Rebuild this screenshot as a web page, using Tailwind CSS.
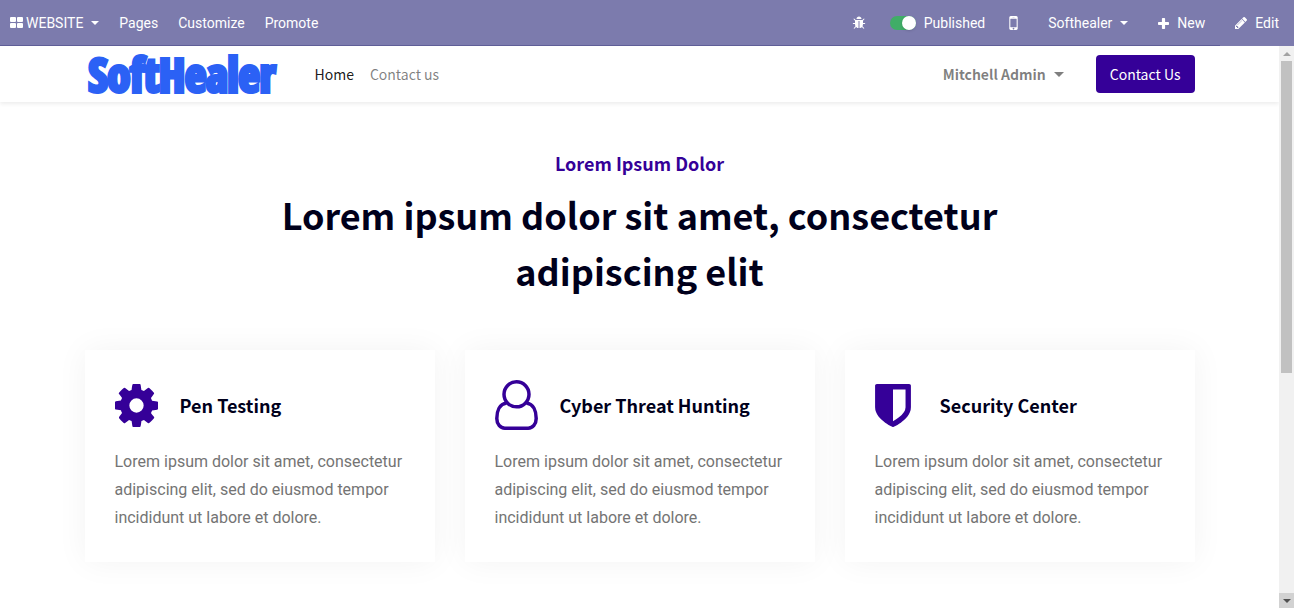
<!DOCTYPE html>
<html lang="en">
<head>
  <meta charset="UTF-8" />
  <meta name="viewport" content="width=device-width, initial-scale=1.0" />
  <title>Home | Softhealer</title>
  <script src="https://cdn.jsdelivr.net/npm/@tailwindcss/browser@4"></script>
</head>
<body class="h-screen flex flex-col overflow-hidden bg-white font-['Roboto',sans-serif] text-base text-[#747474]">
  <!-- editor bar -->
  <nav class="flex h-[46px] shrink-0 items-center justify-between bg-[#7c7bad] text-sm text-white shadow-[inset_0_-1px_0_#5f5e97]">
    <div class="flex h-full items-center gap-5 pl-[10px]">
      <button class="flex items-center">
        <svg class="mr-[3px] h-3 w-[13px]" viewBox="0 0 13 12" fill="currentColor"><rect width="6" height="5" rx="1"/><rect x="7" width="6" height="5" rx="1"/><rect y="6" width="6" height="5" rx="1"/><rect x="7" y="6" width="6" height="5" rx="1"/></svg>
        WEBSITE
        <span class="ml-2 border-x-4 border-t-4 border-x-transparent border-t-white"></span>
      </button>
      <a href="#">Pages</a>
      <a href="#">Customize</a>
      <a href="#">Promote</a>
    </div>
    <div class="flex h-full items-center">
      <button class="mr-6" aria-label="Debug">
        <svg class="size-[14px]" viewBox="0 0 1792 1792" fill="currentColor"><path d="M1696 960q0 26-19 45t-45 19h-224q0 171-67 290l208 209q19 19 19 45t-19 45q-18 19-45 19t-45-19l-198-197q-5 5-15 13t-42 28.5-65 36.5-82 29-97 13v-896h-128v896q-51 0-101.5-13.5t-87-33-66-39-43.5-32.5l-15-14-183 207q-20 21-48 21-24 0-43-16-19-18-20.5-44.5t15.5-46.5l202-227q-58-114-58-274h-224q-26 0-45-19t-19-45 19-45 45-19h224v-294l-173-173q-19-19-19-45t19-45 45-19 45 19l173 173h844l173-173q19-19 45-19t45 19 19 45-19 45l-173 173v294h224q26 0 45 19t19 45zm-480-576h-640q0-133 93.5-226.5t226.5-93.5 226.5 93.5 93.5 226.5z"/></svg>
      </button>
      <label class="mr-6 flex items-center gap-2">
        <input type="checkbox" checked class="flex h-[14px] w-[26px] appearance-none items-center justify-end rounded-full bg-[#40ad67] before:size-[14px] before:rounded-full before:bg-white before:shadow" />
        Published
      </label>
      <button class="mr-[30px]" aria-label="Mobile preview">
        <svg class="h-[14px] w-[9px]" viewBox="512 256 768 1280" fill="currentColor"><path d="M976 1408q0-33-23.5-56.5t-56.5-23.5-56.5 23.5-23.5 56.5 23.5 56.5 56.5 23.5 56.5-23.5 23.5-56.5zm208-160v-704q0-13-9.5-22.5t-22.5-9.5h-512q-13 0-22.5 9.5t-9.5 22.5v704q0 13 9.5 22.5t22.5 9.5h512q13 0 22.5-9.5t9.5-22.5zm-192-848q0-16-16-16h-160q-16 0-16 16t16 16h160q16 0 16-16zm288-16v1024q0 52-38 90t-90 38h-512q-52 0-90-38t-38-90v-1024q0-52 38-90t90-38h512q52 0 90 38t38 90z"/></svg>
      </button>
      <button class="mr-[30px] flex items-center">Softhealer <span class="ml-2 border-x-4 border-t-4 border-x-transparent border-t-white"></span></button>
      <button class="mr-[15px] flex items-center gap-2">
        <svg class="size-[11px]" viewBox="0 0 11 11" fill="currentColor"><path d="M4.7 0h1.6q.8 0 .8.8v3.100h3.100q.8 0 .8.8v1.600q0 .8-.8.8H7.100v3.100q0 .8-.8.8H4.700q-.8 0-.8-.8V7.100H.8Q0 7.100 0 6.300V4.700q0-.8.8-.8h3.100V.8q0-.8.8-.8z"/></svg>
        New
      </button>
      <button class="flex h-full items-center gap-2 bg-[#7c7bad] px-[15px]">
        <svg class="size-3" viewBox="128 149 1515 1515" fill="currentColor"><path d="M491 1536l91-91-235-235-91 91v107h128v128h107zm523-928q0-22-22-22-10 0-17 7l-542 542q-7 7-7 17 0 22 22 22 10 0 17-7l542-542q7-7 7-17zm-54-192l416 416-832 832h-416v-416zm683 96q0 53-37 90l-166 166-416-416 166-165q36-38 90-38 53 0 91 38l235 234q37 39 37 91z"/></svg>
        Edit
      </button>
    </div>
  </nav>

  <div class="flex min-h-0 flex-1">
    <div class="min-w-0 flex-1 overflow-hidden">
      <header class="h-14 shadow-[0_2px_4px_rgba(0,0,0,0.075)] font-['Noto_Sans_CJK_SC',sans-serif] text-sm">
        <div class="mx-auto flex h-full max-w-[1140px] items-center px-[15px]">
          <a href="#" class="mr-8 w-[198px] pl-1 font-['Liberation_Sans_Narrow','Open_Sans_Condensed',sans-serif] text-[46px] leading-14 font-bold text-[#2b61f5] [-webkit-text-stroke:4px_#2b61f5]">SoftHealer</a>
          <a href="#" class="mr-4 text-black/90">Home</a>
          <a href="#" class="text-black/50">Contact us</a>
          <button class="ml-auto mr-8 flex items-center font-bold text-black/50">Mitchell Admin <span class="ml-2 border-x-[5px] border-t-[5px] border-x-transparent border-t-[#7f7f7f]"></span></button>
          <a href="#" class="flex h-[38px] items-center rounded bg-[#350098] px-[14px] text-white">Contact Us</a>
        </div>
      </header>

      <main class="mx-auto max-w-[1140px] px-[15px] pt-[47px]">
        <div class="mx-auto max-w-[730px] text-center font-['Noto_Sans_CJK_SC',sans-serif] font-bold">
          <h4 class="mb-[9px] text-lg leading-7 text-[#350098]">Lorem Ipsum Dolor</h4>
          <h1 class="text-4xl leading-14 text-[#00001b]">Lorem ipsum dolor sit amet, consectetur adipiscing elit</h1>
        </div>

        <div class="mt-[52px] grid grid-cols-3 gap-[30px]">
          <section class="bg-white p-[30px] shadow-[0_0_30px_rgba(0,0,0,0.05)]">
            <div class="mb-[18px] flex h-[50px] items-center">
              <svg class="mr-[22px] size-[43px]" viewBox="0 128 1536 1536" fill="#350098"><path d="M1024 896q0-106-75-181t-181-75-181 75-75 181 75 181 181 75 181-75 75-181zm512-109v222q0 12-8 23t-20 13l-185 28q-19 54-39 91 35 50 107 138 10 12 10 25t-9 23q-27 37-99 108t-94 71q-12 0-26-9l-138-108q-44 23-91 38-16 136-29 186-7 28-36 28h-222q-14 0-24.500-8.500t-11.500-21.500l-28-184q-49-16-90-37l-141 107q-10 9-25 9-14 0-25-11-126-114-165-168-7-10-7-23 0-12 8-23 15-21 51-66.500t54-70.500q-27-50-41-99l-183-27q-13-2-21-12.500t-8-23.500v-222q0-12 8-23t19-13l186-28q14-46 39-92-40-57-107-138-10-12-10-24 0-10 9-23 26-36 98.500-107.500t94.500-71.500q13 0 26 10l138 107q44-23 91-38 16-136 29-186 7-28 36-28h222q14 0 24.500 8.500t11.500 21.500l28 184q49 16 90 37l142-107q9-9 24-9 13 0 25 10 129 119 165 170 7 8 7 22 0 12-8 23-15 21-51 66.500t-54 70.500q26 50 41 98l183 28q13 2 21 12.500t8 23.500z"/></svg>
              <h4 class="font-['Noto_Sans_CJK_SC',sans-serif] text-lg font-bold text-[#00001b]">Pen Testing</h4>
            </div>
            <p class="leading-7">Lorem ipsum dolor sit amet, consectetur adipiscing elit, sed do eiusmod tempor incididunt ut labore et dolore.</p>
          </section>
          <section class="bg-white p-[30px] shadow-[0_0_30px_rgba(0,0,0,0.05)]">
            <div class="mb-[18px] flex h-[50px] items-center">
              <svg class="mr-[22px] h-[50px] w-[43px]" viewBox="0 0 43 50" fill="none" stroke="#350098" stroke-width="3.5"><circle cx="21.500" cy="14.300" r="12.500"/><path d="M11.500 23C4.500 24 1.800 31 1.800 38.500c0 5.500 3.500 9.700 8 9.700h23.400c4.500 0 8-4.200 8-9.700C41.200 31 38.500 24 31.500 23"/></svg>
              <h4 class="font-['Noto_Sans_CJK_SC',sans-serif] text-lg font-bold text-[#00001b]">Cyber Threat Hunting</h4>
            </div>
            <p class="leading-7">Lorem ipsum dolor sit amet, consectetur adipiscing elit, sed do eiusmod tempor incididunt ut labore et dolore.</p>
          </section>
          <section class="bg-white p-[30px] shadow-[0_0_30px_rgba(0,0,0,0.05)]">
            <div class="mb-[18px] flex h-[50px] items-center">
              <svg class="mr-[29px] h-[43px] w-9" viewBox="256 128 1280 1536" fill="#350098"><path d="M1344 960v-640h-448v1137q119-63 213-137 235-184 235-360zm192-768v768q0 86-33.500 170.500t-83 150-118 127.500-126.500 103-121 77.500-89.500 49.500-42.500 20q-12 6-26 6t-26-6q-16-7-42.500-20t-89.500-49.500-121-77.500-126.500-103-118-127.500-83-150-33.500-170.500v-768q0-26 19-45t45-19h1152q26 0 45 19t19 45z"/></svg>
              <h4 class="font-['Noto_Sans_CJK_SC',sans-serif] text-lg font-bold text-[#00001b]">Security Center</h4>
            </div>
            <p class="leading-7">Lorem ipsum dolor sit amet, consectetur adipiscing elit, sed do eiusmod tempor incididunt ut labore et dolore.</p>
          </section>
        </div>
      </main>
    </div>

    <!-- scrollbar -->
    <div class="flex w-[15px] shrink-0 flex-col items-center bg-[#f1f1f1]">
      <div class="flex h-[15px] w-full shrink-0 items-center justify-center"><span class="border-x-4 border-b-4 border-x-transparent border-b-[#a3a3a3]"></span></div>
      <div class="min-h-0 w-full flex-1 px-[2px]"><div class="h-[312px] bg-[#c1c1c1]"></div></div>
      <div class="flex h-[15px] w-full shrink-0 items-center justify-center bg-[#d2d2d2]"><span class="border-x-4 border-t-4 border-x-transparent border-t-[#505050]"></span></div>
    </div>
  </div>
</body>
</html>
